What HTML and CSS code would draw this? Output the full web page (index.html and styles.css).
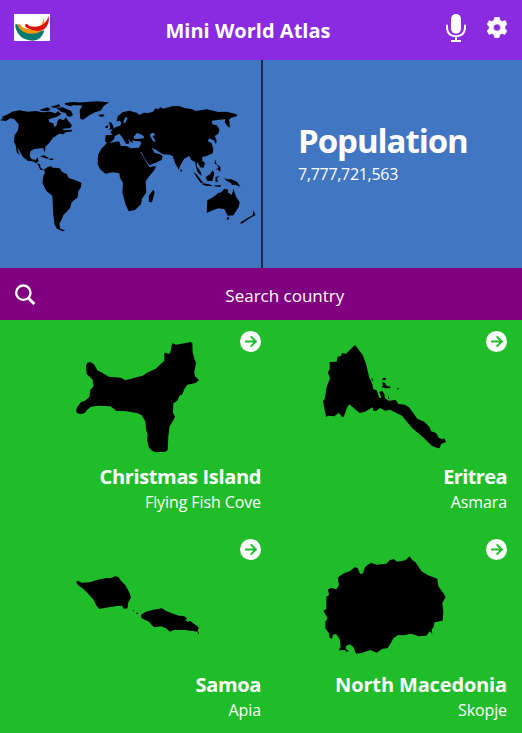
FILE: index.html
```html
<!DOCTYPE html>
<html lang="en">
<head>
<meta charset="utf-8">
<title>Mini World Atlas</title>
<link rel="stylesheet" href="styles.css">
</head>
<body>
<header class="bar">
  <svg class="logo" viewBox="0 0 108 81"><path fill="#fff" d="M0 0h108v81H0z"/><path fill="#087a70" d="M4 31Q11 27 17 41Q42 61 82 51Q88 50 91 48Q85 78 56 80Q14 78 4 39Z"/><path fill="#ff9408" d="M11 31Q15 27 19 32Q31 49 61 45Q88 37 90 9Q96 44 73 56Q36 67 16 43Z"/><path fill="#db1010" d="M33 32Q40 27 46 36Q68 42 86 32Q100 21 104 6Q108 30 91 46Q70 58 42 43Q32 39 33 32Z"/></svg>
  <h1 class="title">Mini World Atlas</h1>
  <nav class="tools">
    <svg class="mic" viewBox="0 0 60 84"><rect x="15" y="0" width="30" height="59" rx="15" fill="#fff"/><path d="M3 32V42Q4 66 30 67Q56 66 57 42V32M30 67V80M15 81H45" fill="none" stroke="#fff" stroke-width="6"/></svg>
    <svg class="gear" viewBox="0 0 60 64"><path fill="#fff" stroke="#fff" stroke-width="2" stroke-linejoin="round" fill-rule="evenodd" d="M23 1H37L39 10L46 14L55 11L60 22L54 29V35L60 42L54 53L45 50L38 54L36 63H23L21 54L14 50L6 53L0 43L6 35V29L0 22L6 11L14 14L21 10ZM30 21A11 11 0 1 0 30 43A11 11 0 1 0 30 21Z"/></svg>
  </nav>
</header>
<section class="world">
  <div class="map-cell">
    <svg class="map" viewBox="0 0 783 420">
      <path d="M0 76L12 68L3 67L24 58L36 50L57 46L84 50L107 48L126 52L151 50L166 55L174 49L184 57L169 66L146 73L148 82L160 85L163 97L170 91L172 79L178 71L191 76L198 67L204 77L216 91L211 99L189 101L190 106L214 104L217 109L197 112L190 118L177 116L158 130L147 145L136 155L135 173L129 159L103 162L91 169L89 183L94 192L106 195L113 187L116 198L109 205L120 207L122 219L132 224L143 216L153 213L158 218L178 219L187 231L201 238L206 249L225 255L244 263L243 277L235 288L233 307L215 322L210 340L200 350L190 360L184 376L178 386L181 401L196 406L188 409L171 401L164 389L160 360L157 302L139 288L127 263L130 243L135 234L132 225L121 224L112 206L98 199L83 197L68 185L60 170L51 157L59 181L50 171L47 151L42 141L44 121L54 106L56 88L43 73L31 70L18 78Z"/>
      <path d="M120 44L143 37L151 42L145 49L123 47ZM151 36L177 28L182 34L168 39ZM170 40L188 37L199 42L213 47L219 60L210 66L201 63L197 54L184 51ZM194 24L221 21L248 23L230 28L211 34L196 29ZM213 29L248 22L290 19L327 22L312 32L302 47L285 52L268 61L249 74L241 71L239 48L242 40L248 32Z"/>
      <path d="M294 60L309 58L314 62L303 66ZM120 184L132 181L147 189L141 191L128 187ZM146 192L157 190L161 194L151 196Z"/>
      <path d="M315 95L323 91L325 97L318 100ZM327 81L335 83L341 97L340 103L325 104L331 99L329 91ZM350 79L353 64L368 52L388 47L410 53L418 60L432 53L445 54L459 50L466 40L473 43L482 37L490 41L516 34L536 33L556 40L575 42L587 48L621 43L655 51L680 50L710 58L712 63L694 68L687 74L689 85L689 98L681 92L674 81L676 73L657 74L636 77L637 88L651 91L658 103L655 116L644 123L650 137L648 147L641 136L628 130L623 138L635 145L640 163L638 175L620 183L607 186L607 197L615 204L611 218L601 217L591 200L590 213L603 232L605 243L593 232L588 217L586 202L573 194L568 182L552 192L541 211L536 224L526 206L518 183L509 179L488 178L469 165L455 158L464 174L479 177L488 183L485 195L465 204L448 211L432 186L424 170L421 171L431 187L444 210L448 216L468 213L464 224L451 239L437 259L439 292L426 311L423 328L405 345L386 349L377 329L367 292L369 264L360 248L358 235L338 232L316 236L300 222L293 208L294 180L303 163L317 148L321 143L315 139L317 120L337 120L331 111L346 97L361 92L364 82L359 77ZM328 144L340 142L357 139L363 153L379 153L393 160L417 158L424 145L421 139L402 138L395 135L400 145L390 139L383 130L389 145L379 147L366 126L358 116L345 123L341 134Z" fill-rule="evenodd"/>
      <path d="M460 284L464 292L456 322L447 321L446 303ZM542 221L547 228L541 230ZM580 231L591 239L610 264L602 264L592 250ZM617 246L630 238L638 226L643 235L637 258L622 258ZM608 264L632 269L639 274L618 272L608 269ZM642 271L663 271L661 276L644 274ZM647 246L660 243L651 249L654 262L646 259ZM645 193L650 208L644 207ZM649 206L661 216L661 230L652 223L645 224L656 218ZM673 249L682 253L694 253L711 260L721 275L706 269L696 270L693 264L679 257ZM622 316L639 307L655 294L664 292L673 281L685 284L683 292L695 300L701 282L707 303L719 322L716 336L700 361L683 362L673 342L655 340L640 345L620 354ZM682 367L688 366L685 374L680 374ZM761 346L766 361L750 369L725 386L720 383L744 368L758 361Z"/>
      <path class="sea" d="M401 125L411 114L422 118L431 123L432 130L412 132L403 131ZM450 117L460 113L466 119L458 124L468 141L459 138L452 127ZM371 77L377 65L383 70L376 83L371 85Z"/>
    </svg>
  </div>
  <div class="stat">
    <h2 class="stat-name">Population</h2>
    <p class="stat-value">7,777,721,563</p>
  </div>
</section>
<div class="search">
  <svg class="lens" viewBox="0 0 62 64"><g fill="none" stroke="#fff" stroke-width="7"><circle cx="25" cy="26" r="21.5"/><path d="M40 42L58 60" stroke-width="9"/></g></svg>
  <span class="search-text">Search country</span>
</div>
<main class="grid">
  <article class="card">
    <svg class="go" viewBox="0 0 63 63"><circle cx="31.500" cy="31.500" r="31.500" fill="#fff"/><path d="M15 31.500H47M32 16L47.500 31.500L32 47" class="arrow"/></svg>
    <svg class="shape" viewBox="-150 0 738 405"><path d="M63 122L67 113L75 111L87 118L97 136L112 143L131 155L168 158L181 166L209 158L233 152L246 143L272 131L298 107V84L304 83L309 87L316 83L321 55L333 59L362 54L376 51L382 54L383 82L388 101L393 113L388 142L390 154L402 165L392 174L367 179L357 194L352 208L343 213L337 227L325 235L324 263L330 275L325 286L314 304L310 334L308 376L301 380L273 382L261 377L252 368L246 344L248 330L243 312L241 289L230 271L216 264L179 258L154 258L137 244L99 242L78 245L67 254L59 264L46 268L36 264L33 256L37 246L48 231L59 228L73 216L76 195L86 183L82 163L65 147Z"/></svg>
    <h3 class="name">Christmas Island</h3>
    <p class="capital">Flying Fish Cove</p>
  </article>
  <article class="card">
    <svg class="go" viewBox="0 0 63 63"><circle cx="31.500" cy="31.500" r="31.500" fill="#fff"/><path d="M15 31.500H47M32 16L47.500 31.500L32 47" class="arrow"/></svg>
    <svg class="shape" viewBox="-147 0 738 405"><path d="M135 60L144 71L158 90L169 119L177 155L187 177L190 193L200 196L208 219L214 218L208 201L217 198L223 207L225 220L236 227L257 225L265 237L284 239L297 247L322 281L343 290L359 307L363 319L378 324L387 339L399 343L403 339L408 351L393 357L389 370L380 368L366 363L341 338L307 310L276 272L240 254L226 257L210 249L199 257L190 258L188 247L165 260L149 264L130 248L118 238L111 248L101 277L95 275L87 263L73 274L54 272L48 276L42 244L39 228L44 223L50 185L60 160L54 143L59 132L59 111L80 110L83 95L94 92L95 84L108 86ZM185 158L190 165L186 168ZM217 160L227 158L227 165L218 166ZM217 171L225 174L229 182L242 185L240 190L229 190L215 187L218 182ZM234 211L239 223L235 221ZM262 189H266V193H262Z"/></svg>
    <h3 class="name tight">Eritrea</h3>
    <p class="capital">Asmara</p>
  </article>
  <article class="card">
    <svg class="go" viewBox="0 0 63 63"><circle cx="31.500" cy="31.500" r="31.500" fill="#fff"/><path d="M15 31.500H47M32 16L47.500 31.500L32 47" class="arrow"/></svg>
    <svg class="shape" viewBox="-150 9 738 405"><path d="M33 155L40 152L50 158L74 157L98 149L124 144L135 145L151 139L161 142L168 152L181 166L192 185L198 202L189 220L188 235L176 236L171 227L155 228L122 233L103 237L93 225L87 211L67 188L51 173L39 166ZM228 255L241 246L264 239L291 235L303 243L327 252L342 257L357 258L366 266L361 271L369 275L376 273L393 286L401 292L398 305L361 300L326 300L315 305L303 295L288 289L269 292L260 285L253 276L241 270L230 265ZM204 241H207V244H204ZM214 248H219V252H214ZM398 307H402V311H398Z"/></svg>
    <h3 class="name">Samoa</h3>
    <p class="capital">Apia</p>
  </article>
  <article class="card">
    <svg class="go" viewBox="0 0 63 63"><circle cx="31.500" cy="31.500" r="31.500" fill="#fff"/><path d="M15 31.500H47M32 16L47.500 31.500L32 47" class="arrow"/></svg>
    <svg class="shape" viewBox="-147 9 738 405"><path d="M299 79L307 91L316 96L334 123L354 136L382 146L385 169L401 191L407 201L397 219L400 246L398 272L373 277L370 293L365 298L367 312L360 303L349 317L326 319L304 311L281 316L264 315L250 325L243 339L233 354L216 357L200 368L181 360L158 368L138 371L130 351L120 343L108 348L107 357L116 362L110 366L105 360L86 361L92 351L89 326L78 312L69 314L66 326L59 323L57 310L46 295L46 276L53 264L40 242L49 237V200L57 195L54 178L63 174L79 178L87 166L83 143L99 131L120 123L134 112L143 114L150 131L158 131L165 111L183 98L199 104L229 101L239 91L251 87L261 95L286 91Z"/></svg>
    <h3 class="name wide">North Macedonia</h3>
    <p class="capital">Skopje</p>
  </article>
</main>
</body>
</html>
```
FILE: styles.css
```css
* { box-sizing: border-box; }
body {
  margin: 0;
  width: 522px;
  height: 733px;
  overflow: hidden;
  color: #fff;
  background: #1fbd2a;
  font-family: "Open Sans", "Noto Sans", sans-serif;
}
h1, h2, h3, p { margin: 0; }
svg { display: block; flex: none; }
.bar {
  display: grid;
  grid-template-columns: 76px 1fr 101px;
  height: 60px;
  padding: 0 15px 0 14px;
  background: #8a2be2;
}
.logo { width: 36px; height: 27px; margin-top: 14px; }
.title { font-size: 20px; line-height: 61px; text-align: center; white-space: nowrap; letter-spacing: 0.02px; }
.tools { display: flex; justify-content: flex-end; gap: 21px; padding-top: 14px; }
.mic { width: 20px; height: 28px; }
.gear { width: 20px; height: 21px; margin-top: 3px; }
.world { display: flex; height: 208px; background: #4176c2; }
.map-cell { width: 263px; padding-top: 35px; border-right: 2px solid #1d2b48; }
.map { width: 261px; height: 140px; }
.sea { fill: #4176c2; }
.stat { padding: 58px 0 0 35px; }
.stat-name { font-size: 33px; line-height: 46px; letter-spacing: -1.05px; }
.stat-value { font-size: 16px; line-height: 21px; letter-spacing: -0.3px; }
.search { display: flex; height: 52px; padding-left: 15px; background: #800080; }
.lens { width: 20.670px; height: 21.330px; margin-top: 16px; }
.search-text { flex: 1; margin-left: 12px; text-align: center; font-size: 17px; line-height: 56px; }
.grid { display: grid; grid-template-columns: 246px 246px; grid-auto-rows: 208px; padding: 0 15px; }
.card { position: relative; padding-top: 5px; text-align: right; }
.go { position: absolute; top: 11px; right: 0; width: 21px; height: 21px; }
.arrow { fill: none; stroke: #1fbd2a; stroke-width: 6; }
.shape { width: 246px; height: 135px; }
.name { margin-top: 2px; font-size: 20px; line-height: 29px; letter-spacing: -0.35px; }
.name.tight { letter-spacing: -0.6px; }
.name.wide { letter-spacing: -0.15px; }
.capital { font-size: 16px; line-height: 22px; letter-spacing: -0.1px; }
```
